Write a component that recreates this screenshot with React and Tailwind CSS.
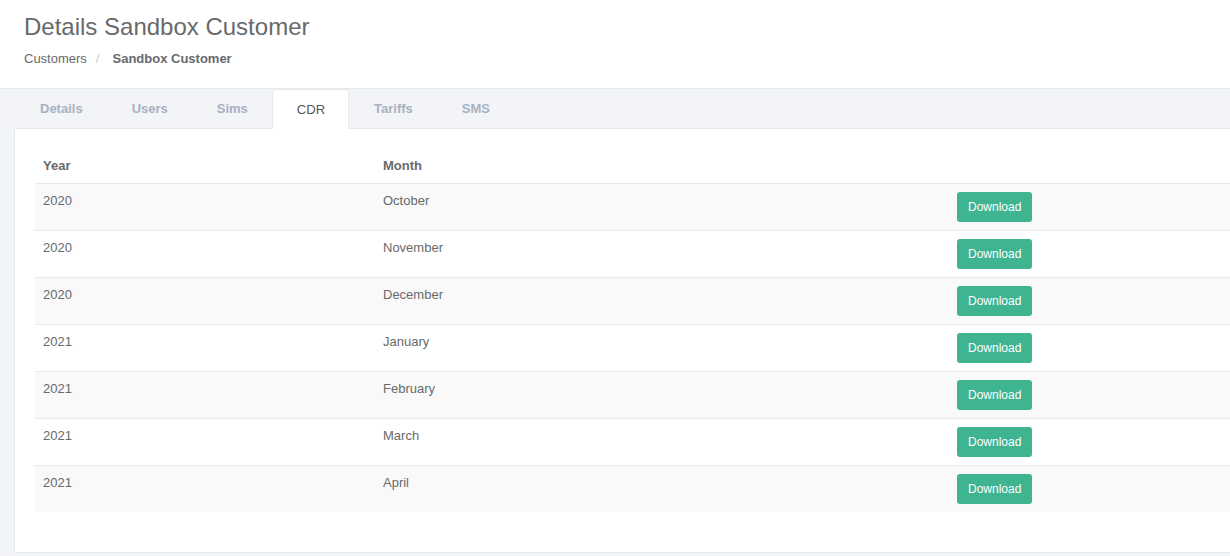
const tabs = ['Details', 'Users', 'Sims', 'CDR', 'Tariffs', 'SMS'];

const rows = [
  { year: '2020', month: 'October' },
  { year: '2020', month: 'November' },
  { year: '2020', month: 'December' },
  { year: '2021', month: 'January' },
  { year: '2021', month: 'February' },
  { year: '2021', month: 'March' },
  { year: '2021', month: 'April' },
];

export default function App() {
  return (
    <div
      className="w-[1230px] h-[556px] overflow-hidden bg-[#f3f4f7] text-[#676a6c] text-[13px]"
      style={{ fontFamily: '"Liberation Sans", Arial, sans-serif' }}
    >
      {/* Page heading */}
      <div className="bg-white border-b border-[#e7eaec] h-[89px] px-6 pt-[13px]">
        <h2 className="text-[24px] leading-[28px] font-normal text-[#676a6c]">Details Sandbox Customer</h2>
        <div className="flex items-center mt-[9px] leading-[18px]">
          <span>Customers</span>
          <span className="text-[#cccccc] pl-[9px] pr-[13px]">/</span>
          <span className="font-bold">Sandbox Customer</span>
        </div>
      </div>

      {/* Tabs */}
      <div className="w-[1260px] pl-[14px]">
        <div className="flex gap-[1px] pl-[2px] h-[39px] items-end">
          {tabs.map((t) => (
            <div
              key={t}
              className={
                t === 'CDR'
                  ? 'h-[40px] -ml-[1px] pl-[24px] pr-[23px] flex items-center bg-white text-[#555555] border border-b-0 border-[#e7eaec] rounded-t-[4px] -mb-[1px] relative z-10'
                  : 'h-[39px] px-[23px] flex items-center font-bold text-[#a7b1c2] border border-transparent'
              }
            >
              {t}
            </div>
          ))}
        </div>

        {/* Panel */}
        <div className="bg-white border border-[#e7eaec] p-5 pb-[40px]">
          <table className="w-full border-collapse">
            <thead>
              <tr className="border-b border-[#e7eaec]">
                <th className="text-left font-bold text-[#676a6c] px-2 pt-[8px] pb-[8px] leading-[18px] w-[340px]">Year</th>
                <th className="text-left font-bold text-[#676a6c] px-2 pt-[8px] pb-[8px] leading-[18px] w-[574px]">Month</th>
                <th className="px-2"></th>
              </tr>
            </thead>
            <tbody>
              {rows.map((r, i) => (
                <tr key={r.month} className={(i % 2 === 0 ? 'bg-[#f9f9f9] ' : 'bg-white ') + 'border-t border-[#e7eaec]'}>
                  <td className="align-top px-2 py-2 leading-[18px]">{r.year}</td>
                  <td className="align-top px-2 py-2 leading-[18px]">{r.month}</td>
                  <td className="align-top px-2 py-2">
                    <button className="h-[30px] px-[11px] rounded-[3px] bg-[#3eb491] text-white text-[12px]">
                      Download
                    </button>
                  </td>
                </tr>
              ))}
            </tbody>
          </table>
        </div>
      </div>
    </div>
  );
}
